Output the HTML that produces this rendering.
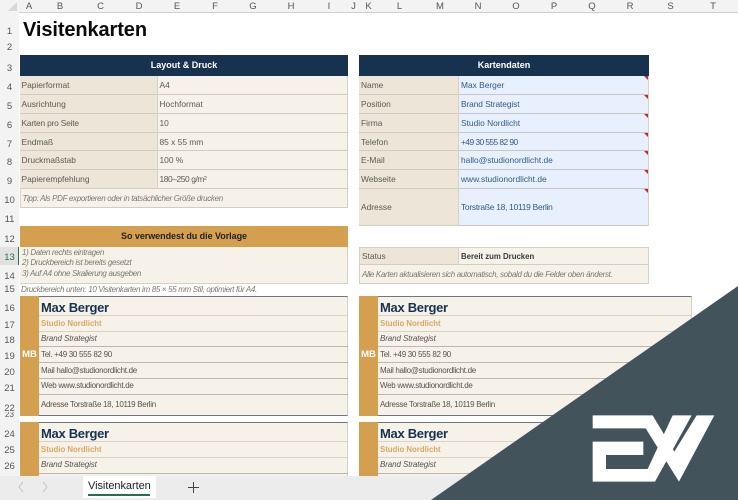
<!DOCTYPE html>
<html><head><meta charset="utf-8"><style>
html,body{margin:0;padding:0;background:#fff}
#p{position:relative;width:738px;height:500px;overflow:hidden;background:#fff;font-family:"Liberation Sans",sans-serif;font-size:8.4px;color:#555;filter:blur(.25px)}
#p div{position:absolute;box-sizing:border-box;white-space:nowrap}
.c{height:13px;top:0;text-align:center;font-size:9.5px;line-height:13px;color:#555}
.r{left:0;width:19px;text-align:center;font-size:9.5px;line-height:12px;color:#555}
.l,.v,.e{background:#ece5d8;border-bottom:1px solid #d3cdc0;border-right:1px solid #d8d2c6;padding-left:2px;display:flex;align-items:center;color:#5c5a52}
.v{background:#f6f2ea}
.e{background:#e8f0fd;color:#2f5a8a;border-bottom-color:#c8c8c8}
.e:after{content:"";position:absolute;right:0;top:0;border-top:4px solid #c8262c;border-left:4px solid transparent}
.lt{padding-left:1.5px}
.h{background:#17324f;color:#fff;font-weight:bold;font-size:9px;text-align:center;line-height:21px}
.i{font-style:italic;color:#7b786f;font-size:8px;letter-spacing:-.33px}
.g{background:#d4a050}
.cb{background:#f6f2ea}
.ln{height:1px;background:#d8d3c7}
.d{height:1px;background:#b9b7b0}
.n{font-weight:bold;font-size:13px;letter-spacing:-.3px;color:#17324f;line-height:18px}
.s{font-weight:bold;font-size:7.8px;color:#d9a860;line-height:12px}
.t{font-size:8px;letter-spacing:-.3px;color:#55534d;line-height:12px}
.it{font-style:italic;color:#55534d;font-size:8px;letter-spacing:-.1px}
</style></head><body><div id="p">
<div style="left:0;top:0;width:738px;height:13px;background:#f3f3f3;border-bottom:1px solid #d0d0d0"></div>
<div style="left:0;top:0;width:19px;height:500px;background:#f3f3f3"></div>
<div style="left:8px;top:2px;width:0;height:0;border-bottom:9px solid #d8d8d8;border-left:9px solid transparent"></div>
<div class="c" style="left:19px;width:20px">A</div><div class="c" style="left:39px;width:42px">B</div><div class="c" style="left:81px;width:39px">C</div><div class="c" style="left:120px;width:38px">D</div><div class="c" style="left:158px;width:38px">E</div><div class="c" style="left:196px;width:38px">F</div><div class="c" style="left:234px;width:38px">G</div><div class="c" style="left:272px;width:38px">H</div><div class="c" style="left:310px;width:38px">I</div><div class="c" style="left:348px;width:11px">J</div><div class="c" style="left:359px;width:19px">K</div><div class="c" style="left:378px;width:43px">L</div><div class="c" style="left:421px;width:38px">M</div><div class="c" style="left:459px;width:38px">N</div><div class="c" style="left:497px;width:38px">O</div><div class="c" style="left:535px;width:38px">P</div><div class="c" style="left:573px;width:38px">Q</div><div class="c" style="left:611px;width:38px">R</div><div class="c" style="left:649px;width:43px">S</div><div class="c" style="left:692px;width:42px">T</div>
<div class="r" style="top:26px">1</div><div class="r" style="top:42px">2</div><div class="r" style="top:63px">3</div><div class="r" style="top:82px">4</div><div class="r" style="top:101px">5</div><div class="r" style="top:120px">6</div><div class="r" style="top:139px">7</div><div class="r" style="top:157px">8</div><div class="r" style="top:176px">9</div><div class="r" style="top:195px">10</div><div class="r" style="top:214px">11</div><div class="r" style="top:234px">12</div>
<div style="left:0;top:247px;width:19px;height:18px;background:#e1e1e1;border-right:1.5px solid #217346"></div>
<div class="r" style="top:252px;color:#217346">13</div><div class="r" style="top:271px">14</div><div class="r" style="top:284px">15</div><div class="r" style="top:303px">16</div><div class="r" style="top:320px">17</div><div class="r" style="top:335px">18</div><div class="r" style="top:351px">19</div><div class="r" style="top:367px">20</div><div class="r" style="top:383px">21</div><div class="r" style="top:403px">22</div><div class="r" style="top:412px;height:6px;overflow:hidden;font-size:8px;line-height:6px">23</div><div class="r" style="top:429px">24</div><div class="r" style="top:445px">25</div><div class="r" style="top:461px">26</div>

<div style="left:23px;top:17px;font-size:20px;font-weight:bold;color:#0a0a0a;line-height:26px;letter-spacing:-.1px">Visitenkarten</div>

<div class="h" style="left:20px;top:55px;width:328px;height:21px">Layout &amp; Druck</div>
<div class="l lt" style="left:20px;top:76px;width:138px;height:19px">Papierformat</div><div class="v lt" style="left:158px;top:76px;width:190px;height:19px">A4</div>
<div class="l lt" style="left:20px;top:95px;width:138px;height:19px">Ausrichtung</div><div class="v lt" style="left:158px;top:95px;width:190px;height:19px">Hochformat</div>
<div class="l lt" style="left:20px;top:114px;width:138px;height:19px;letter-spacing:-.2px">Karten pro Seite</div><div class="v lt" style="left:158px;top:114px;width:190px;height:19px">10</div>
<div class="l lt" style="left:20px;top:133px;width:138px;height:18px">Endmaß</div><div class="v lt" style="left:158px;top:133px;width:190px;height:18px">85 x 55 mm</div>
<div class="l lt" style="left:20px;top:151px;width:138px;height:19px">Druckmaßstab</div><div class="v lt" style="left:158px;top:151px;width:190px;height:19px">100 %</div>
<div class="l lt" style="left:20px;top:170px;width:138px;height:19px">Papierempfehlung</div><div class="v lt" style="left:158px;top:170px;width:190px;height:19px;letter-spacing:-.4px">180–250 g/m²</div>
<div class="v i lt" style="left:20px;top:189px;width:328px;height:19px;border-left:1px solid #dcd7cb">Tipp: Als PDF exportieren oder in tatsächlicher Größe drucken</div>

<div class="h" style="left:359px;top:55px;width:290px;height:21px">Kartendaten</div>
<div class="l" style="left:359px;top:76px;width:100px;height:19px">Name</div><div class="e" style="left:459px;top:76px;width:190px;height:19px">Max Berger</div>
<div class="l" style="left:359px;top:95px;width:100px;height:19px">Position</div><div class="e" style="left:459px;top:95px;width:190px;height:19px;letter-spacing:-.1px">Brand Strategist</div>
<div class="l" style="left:359px;top:114px;width:100px;height:19px">Firma</div><div class="e" style="left:459px;top:114px;width:190px;height:19px">Studio Nordlicht</div>
<div class="l" style="left:359px;top:133px;width:100px;height:18px">Telefon</div><div class="e" style="left:459px;top:133px;width:190px;height:18px;letter-spacing:-.55px">+49 30 555 82 90</div>
<div class="l" style="left:359px;top:151px;width:100px;height:19px">E-Mail</div><div class="e" style="left:459px;top:151px;width:190px;height:19px">hallo@studionordlicht.de</div>
<div class="l" style="left:359px;top:170px;width:100px;height:19px">Webseite</div><div class="e" style="left:459px;top:170px;width:190px;height:19px">www.studionordlicht.de</div>
<div class="l" style="left:359px;top:189px;width:100px;height:37px">Adresse</div><div class="e" style="left:459px;top:189px;width:190px;height:37px;letter-spacing:-.25px">Torstraße 18, 10119 Berlin</div>

<div class="g" style="left:20px;top:226px;width:328px;height:21px;color:#222;font-weight:bold;font-size:9px;letter-spacing:-.05px;text-align:center;line-height:21px">So verwendest du die Vorlage</div>
<div class="cb" style="left:20px;top:247px;width:328px;height:37px;border-bottom:1px solid #d6d1c5;border-right:1px solid #d6d1c5"></div>
<div class="i" style="left:22px;top:247px;line-height:12px">1) Daten rechts eintragen</div>
<div class="i" style="left:22px;top:257px;line-height:12px">2) Druckbereich ist bereits gesetzt</div>
<div class="i" style="left:22px;top:268px;line-height:12px">3) Auf A4 ohne Skalierung ausgeben</div>
<div class="i" style="left:21px;top:284px;line-height:12px">Druckbereich unten: 10 Visitenkarten im 85 × 55 mm Stil, optimiert für A4.</div>

<div class="l" style="left:359px;top:247px;width:100px;height:18px;border-top:1px solid #d6d1c5;border-left:1px solid #d6d1c5">Status</div><div class="v" style="left:459px;top:247px;width:190px;height:18px;border-top:1px solid #d6d1c5;font-weight:bold;color:#3a3a3a;font-size:7.8px">Bereit zum Drucken</div>
<div class="v i" style="left:359px;top:265px;width:290px;height:19px;border-left:1px solid #d6d1c5">Alle Karten aktualisieren sich automatisch, sobald du die Felder oben änderst.</div>

<!-- card 1 left -->
<div class="cb" style="left:20px;top:296px;width:328px;height:120px;border:1px solid #d6d1c5;border-top:1px solid #6c7580;border-bottom:1px solid #6c7580"></div>
<div class="g" style="left:20px;top:296px;width:19px;height:120px"></div>
<div class="ln" style="left:39px;top:315px;width:309px"></div><div class="ln" style="left:39px;top:331px;width:309px"></div><div class="d" style="left:39px;top:346px;width:309px"></div><div class="d" style="left:39px;top:362px;width:309px"></div><div class="d" style="left:39px;top:378px;width:309px"></div><div class="d" style="left:39px;top:394px;width:309px"></div>
<div class="n" style="left:41px;top:299px">Max Berger</div><div class="s" style="left:41px;top:318px">Studio Nordlicht</div>
<div class="t it" style="left:41px;top:333px">Brand Strategist</div><div class="t" style="left:41px;top:349px">Tel. +49 30 555 82 90</div><div class="t" style="left:41px;top:365px">Mail hallo@studionordlicht.de</div><div class="t" style="left:41px;top:380px">Web www.studionordlicht.de</div><div class="t" style="left:41px;top:399px">Adresse Torstraße 18, 10119 Berlin</div>
<div style="left:20px;top:349px;width:19px;text-align:center;color:#fff;font-weight:bold;font-size:9.5px;line-height:12px">MB</div>

<!-- card 1 right -->
<div class="cb" style="left:359px;top:296px;width:333px;height:120px;border:1px solid #d6d1c5;border-top:1px solid #6c7580;border-bottom:1px solid #6c7580"></div>
<div class="g" style="left:359px;top:296px;width:19px;height:120px"></div>
<div class="ln" style="left:378px;top:315px;width:314px"></div><div class="ln" style="left:378px;top:331px;width:314px"></div><div class="d" style="left:378px;top:346px;width:314px"></div><div class="d" style="left:378px;top:362px;width:314px"></div><div class="d" style="left:378px;top:378px;width:314px"></div><div class="d" style="left:378px;top:394px;width:314px"></div>
<div class="n" style="left:380px;top:299px">Max Berger</div><div class="s" style="left:380px;top:318px">Studio Nordlicht</div>
<div class="t it" style="left:380px;top:333px">Brand Strategist</div><div class="t" style="left:380px;top:349px">Tel. +49 30 555 82 90</div><div class="t" style="left:380px;top:365px">Mail hallo@studionordlicht.de</div><div class="t" style="left:380px;top:380px">Web www.studionordlicht.de</div><div class="t" style="left:380px;top:399px">Adresse Torstraße 18, 10119 Berlin</div>
<div style="left:359px;top:349px;width:19px;text-align:center;color:#fff;font-weight:bold;font-size:9.5px;line-height:12px">MB</div>

<!-- card 2 left -->
<div class="cb" style="left:20px;top:422px;width:328px;height:60px;border:1px solid #d6d1c5;border-top:1px solid #6c7580"></div>
<div class="g" style="left:20px;top:422px;width:19px;height:60px"></div>
<div class="ln" style="left:39px;top:441px;width:309px"></div><div class="ln" style="left:39px;top:457px;width:309px"></div><div class="d" style="left:39px;top:473px;width:309px"></div>
<div class="n" style="left:41px;top:425px">Max Berger</div><div class="s" style="left:41px;top:444px">Studio Nordlicht</div><div class="t it" style="left:41px;top:459px">Brand Strategist</div>

<!-- card 2 right -->
<div class="cb" style="left:359px;top:422px;width:333px;height:60px;border:1px solid #d6d1c5;border-top:1px solid #6c7580"></div>
<div class="g" style="left:359px;top:422px;width:19px;height:60px"></div>
<div class="ln" style="left:378px;top:441px;width:314px"></div><div class="ln" style="left:378px;top:457px;width:314px"></div><div class="d" style="left:378px;top:473px;width:314px"></div>
<div class="n" style="left:380px;top:425px">Max Berger</div><div class="s" style="left:380px;top:444px">Studio Nordlicht</div><div class="t it" style="left:380px;top:459px">Brand Strategist</div>

<!-- tab bar -->
<div style="left:0;top:476px;width:738px;height:24px;background:#ececec"></div>
<div style="left:83px;top:476px;width:73px;height:22px;background:#fff"></div>
<div style="left:88px;top:479px;font-size:11px;color:#222;line-height:14px;letter-spacing:-.05px">Visitenkarten</div>
<div style="left:88px;top:494px;width:62px;height:1.5px;background:#217346"></div>
<svg style="position:absolute;left:0;top:476px" width="210" height="24"><path d="M23 6l-4 5 4 5M43 6l4 5-4 5" fill="none" stroke="#c4c4c4" stroke-width="1"/><path d="M193.500 6v11M188 11.500h11" stroke="#444" stroke-width="1" fill="none"/></svg>

<!-- corner -->
<svg style="position:absolute;left:0;top:0" width="738" height="500"><polygon points="738,286 431,500 738,500" fill="#42535b"/>
<g transform="translate(580 400) scale(.3333)" fill="#fff"><polygon points="38,46 218,46 283,155 350,46 403,46 297,245 197,85 38,85"/><polygon points="278,46 335,46 225,245 38,245 38,125 190,125 190,165 78,165 78,207 203,207"/></g></svg>
</div></body></html>
